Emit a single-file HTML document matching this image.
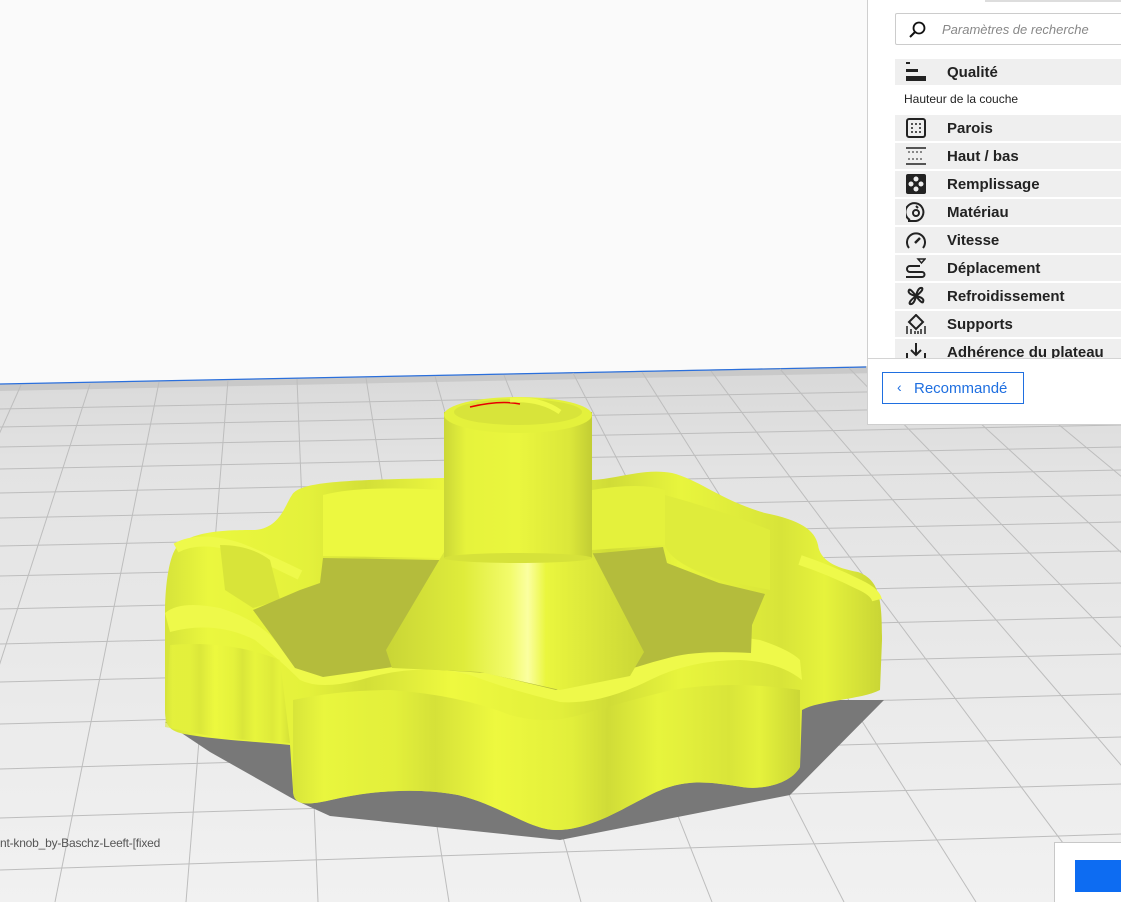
<!DOCTYPE html>
<html><head><meta charset="utf-8"><style>
*{margin:0;padding:0;box-sizing:border-box}
body{width:1121px;height:902px;overflow:hidden;background:#fafafa;font-family:"Liberation Sans","DejaVu Sans",sans-serif;position:relative}
#scene{position:absolute;left:0;top:0}
#panel{position:absolute;left:867px;top:0;width:254px;height:425px;background:#fff;border-left:1px solid #cfcfcf;border-bottom:1px solid #cfcfcf}
.search{position:absolute;left:27px;top:13px;width:240px;height:32px;border:1px solid #ccc;border-radius:2px}
.search span{position:absolute;left:46px;top:8px;font-size:13px;font-style:italic;color:#888}
.row{position:absolute;left:27px;width:240px;height:26px;background:#efefef}
.row b{position:absolute;left:52px;top:5px;font-size:15px;color:#222}
.row svg{position:absolute;left:11px;top:3px}
.sub{position:absolute;left:36px;top:92px;font-size:12px;color:#222}
.sep{position:absolute;left:0;top:358px;width:254px;height:1px;background:#d4d4d4}
.btn{position:absolute;left:14px;top:372px;width:142px;height:32px;border:1px solid #1f6fe0;color:#1f6fe0;font-size:15px}
.btn span{position:absolute;left:31px;top:7px}
.btn i{position:absolute;left:14px;top:6px;font-style:normal;font-size:14px}
#br{position:absolute;left:1054px;top:842px;width:67px;height:60px;background:#fff;border-left:1px solid #c8c8c8;border-top:1px solid #c8c8c8}
#br div{position:absolute;left:20px;top:17px;width:47px;height:32px;background:#0d6cf2}
#fn{position:absolute;left:0;top:836px;font-size:12px;color:#555;letter-spacing:-0.2px}
</style></head><body>
<svg id="scene" width="1121" height="902" viewBox="0 0 1121 902">
<defs>
<linearGradient id="fl" x1="0" y1="0" x2="0" y2="1"><stop offset="0" stop-color="#d8d8d8"/><stop offset="0.2" stop-color="#e3e3e3"/><stop offset="1" stop-color="#f1f1f1"/></linearGradient>
<linearGradient id="wall" x1="0" y1="0" x2="1" y2="0">
<stop offset="0" stop-color="#d6e33a"/><stop offset="0.06" stop-color="#eaf73e"/><stop offset="0.2" stop-color="#e4f13b"/><stop offset="0.28" stop-color="#d3df38"/><stop offset="0.4" stop-color="#eef93f"/><stop offset="0.55" stop-color="#e2ef3b"/><stop offset="0.62" stop-color="#d0dc37"/><stop offset="0.72" stop-color="#e8f53d"/><stop offset="0.86" stop-color="#d8e439"/><stop offset="0.92" stop-color="#e6f33c"/><stop offset="1" stop-color="#c9d535"/></linearGradient>
<linearGradient id="col" x1="0" y1="0" x2="1" y2="0"><stop offset="0" stop-color="#cbd737"/><stop offset="0.15" stop-color="#e6f33c"/><stop offset="0.5" stop-color="#eaf63e"/><stop offset="0.85" stop-color="#dbe73a"/><stop offset="1" stop-color="#c2cd34"/></linearGradient>
<linearGradient id="cone" x1="0" y1="0" x2="1" y2="0"><stop offset="0" stop-color="#c9d536"/><stop offset="0.3" stop-color="#dfec3b"/><stop offset="0.48" stop-color="#f2fb6a"/><stop offset="0.55" stop-color="#fbffa0"/><stop offset="0.62" stop-color="#eaf63e"/><stop offset="1" stop-color="#cad636"/></linearGradient>
</defs>
<polygon points="0,384 1121,361 1121,902 0,902" fill="url(#fl)"/>
<polygon points="0,384 1121,361 1121,368 0,391" fill="#c9c9c9"/>
<line x1="0" y1="384" x2="866" y2="367" stroke="#2a6fdc" stroke-width="1.2"/>
<g stroke="#bdbdbd" stroke-width="1">
<line x1="0" y1="409" x2="1121" y2="387"/><line x1="0" y1="427" x2="1121" y2="405"/><line x1="0" y1="447" x2="1121" y2="425"/><line x1="0" y1="469" x2="1121" y2="447"/><line x1="0" y1="493" x2="1121" y2="470"/><line x1="0" y1="518" x2="1121" y2="495"/><line x1="0" y1="546" x2="1121" y2="522"/><line x1="0" y1="576" x2="1121" y2="551"/><line x1="0" y1="609" x2="1121" y2="583"/><line x1="0" y1="644" x2="1121" y2="617"/><line x1="0" y1="682" x2="1121" y2="654"/><line x1="0" y1="724" x2="1121" y2="694"/><line x1="0" y1="769" x2="1121" y2="737"/><line x1="0" y1="818" x2="1121" y2="784"/><line x1="0" y1="870" x2="1121" y2="834"/>
<line x1="21" y1="385" x2="-209" y2="902"/><line x1="90" y1="384" x2="-77" y2="902"/><line x1="159" y1="382" x2="55" y2="902"/><line x1="228" y1="380" x2="186" y2="902"/><line x1="297" y1="379" x2="318" y2="902"/><line x1="366" y1="378" x2="449" y2="902"/><line x1="435" y1="376" x2="581" y2="902"/><line x1="504" y1="375" x2="712" y2="902"/><line x1="573" y1="373" x2="844" y2="902"/><line x1="642" y1="372" x2="976" y2="902"/><line x1="711" y1="371" x2="1107" y2="902"/><line x1="780" y1="369" x2="1239" y2="902"/><line x1="849" y1="368" x2="1370" y2="902"/><line x1="918" y1="366" x2="1502" y2="902"/><line x1="987" y1="365" x2="1634" y2="902"/><line x1="1056" y1="364" x2="1765" y2="902"/>
</g>
<!-- shadow -->
<polygon points="165,722 210,752 295,800 330,816 560,840 790,795 884,700 860,700 600,700 300,720" fill="#787878"/>
<!-- knob silhouette -->
<path d="M165,613 C165,590 168,560 176,548 C190,530 230,530 255,530 C280,528 285,505 292,495 C300,482 340,480 444,478 L593,480 C620,478 645,468 672,473 C700,480 720,500 765,513 C800,520 815,530 818,545 C820,560 835,568 858,572 C880,580 882,600 882,640 L880,690 C860,700 820,700 802,710 L800,767 C790,785 760,790 742,787 C700,780 680,780 650,795 C620,810 590,830 556,830 C530,830 500,805 458,795 C420,788 380,790 340,798 C310,805 293,808 293,790 L290,745 C260,742 220,740 190,735 C170,732 165,727 165,710 Z" fill="url(#wall)"/>
<!-- rim tops (lighter) -->
<path d="M165,613 Q180,600 220,608 Q250,617 270,635 Q290,660 320,668 Q360,668 400,660 Q460,655 510,675 Q545,690 570,680 Q610,668 640,650 Q700,630 760,640 Q790,650 800,660 L802,680 Q780,662 740,660 Q690,660 650,680 Q600,705 560,702 Q510,690 470,675 Q420,662 360,680 Q320,690 300,680 Q280,660 255,640 Q215,620 170,632 Z" fill="#eef94a"/>
<path d="M176,548 Q200,535 240,548 Q270,560 300,575" stroke="#eef94a" stroke-width="10" fill="none"/>
<path d="M800,560 Q830,570 860,585 Q875,592 877,600" stroke="#eef94a" stroke-width="10" fill="none"/>
<!-- inner back walls -->
<path d="M323,495 Q360,485 444,490 L444,558 L323,556 Z" fill="#ecf840"/>
<path d="M592,490 Q640,482 665,490 L665,545 L592,550 Z" fill="#e4f13c"/>
<path d="M665,495 Q720,510 770,530 L770,590 L720,580 Q670,563 665,545 Z" fill="#dfec3b"/>
<path d="M220,545 Q250,545 270,560 L280,600 L253,608 L225,590 Z" fill="#d8e439"/>
<!-- floor -->
<path d="M253,610 L300,590 L320,583 L323,558 L440,560 L600,553 L663,547 L667,563 L719,583 L765,594 L752,625 L751,653 Q700,650 672,657 Q640,665 607,677 L556,690 L486,673 L393,667 L323,677 L295,668 L275,640 Z" fill="#b4bc3c"/>
<!-- cone -->
<path d="M444,552 L592,552 L644,652 L630,676 L560,690 L480,672 L392,668 L386,650 Z" fill="url(#cone)"/>
<!-- column -->
<rect x="444" y="412" width="148" height="146" fill="url(#col)"/>
<ellipse cx="518" cy="558" rx="74" ry="5" fill="#d6e23a"/>
<ellipse cx="518" cy="415" rx="74" ry="18" fill="#e4f13c"/>
<ellipse cx="518" cy="412" rx="64" ry="13" fill="#d8e43a"/>
<path d="M470,407 Q500,400 520,404" stroke="#e60000" stroke-width="1.5" fill="none"/>
<path d="M510,400 Q540,398 560,412" stroke="#eef94a" stroke-width="5" fill="none"/>
<!-- front rim wall repaint -->
<path d="M293,700 Q340,690 390,690 Q460,695 510,715 Q545,725 580,715 Q630,700 672,690 Q730,680 800,690 L800,767 C790,785 760,790 742,787 C700,780 680,780 650,795 C620,810 590,830 556,830 C530,830 500,805 458,795 C420,788 380,790 340,798 C310,805 293,808 293,790 Z" fill="url(#wall)" opacity="0.9"/>
<path d="M170,645 Q230,640 280,660 L290,743 L220,738 L165,727 Z" fill="url(#wall)" opacity="0.6"/>
</svg>

<div id="panel">
<div style="position:absolute;left:117px;top:0;width:137px;height:2px;background:#ddd"></div>
<div class="search">
<svg width="20" height="20" style="position:absolute;left:12px;top:6px" viewBox="0 0 20 20"><circle cx="11" cy="8" r="5.5" fill="none" stroke="#111" stroke-width="1.8"/><line x1="7" y1="12" x2="2" y2="17" stroke="#111" stroke-width="2"/></svg>
<span>Paramètres de recherche</span></div>
<div class="row" style="top:59px"><svg width="20" height="20" viewBox="0 0 20 20"><rect x="0" y="0" width="4" height="2" fill="#222"/><rect x="0" y="7" width="12" height="3" fill="#222"/><rect x="0" y="14" width="20" height="5" fill="#222"/></svg><b>Qualité</b></div>
<div class="sub">Hauteur de la couche</div>
<div class="row" style="top:115px"><svg width="20" height="20" viewBox="0 0 20 20"><rect x="1" y="1" width="18" height="18" rx="2" fill="none" stroke="#222" stroke-width="2"/><g fill="#222"><circle cx="6" cy="6" r="1"/><circle cx="10" cy="6" r="1"/><circle cx="14" cy="6" r="1"/><circle cx="6" cy="10" r="1"/><circle cx="14" cy="10" r="1"/><circle cx="6" cy="14" r="1"/><circle cx="10" cy="14" r="1"/><circle cx="14" cy="14" r="1"/></g></svg><b>Parois</b></div>
<div class="row" style="top:143px"><svg width="20" height="20" viewBox="0 0 20 20"><g stroke="#222"><line x1="0" y1="2" x2="20" y2="2" stroke-width="1.5"/><line x1="2" y1="6" x2="18" y2="6" stroke-dasharray="2 2"/><line x1="2" y1="13" x2="18" y2="13" stroke-dasharray="2 2"/><line x1="0" y1="18" x2="20" y2="18" stroke-width="1.5"/></g></svg><b>Haut / bas</b></div>
<div class="row" style="top:171px"><svg width="20" height="20" viewBox="0 0 20 20"><rect x="0" y="0" width="20" height="20" rx="2" fill="#222"/><g fill="#eee"><circle cx="10" cy="5" r="2.5"/><circle cx="5" cy="10" r="2.5"/><circle cx="15" cy="10" r="2.5"/><circle cx="10" cy="15" r="2.5"/></g></svg><b>Remplissage</b></div>
<div class="row" style="top:199px"><svg width="20" height="20" viewBox="0 0 20 20"><path d="M4,18 A9,9 0 1,1 10,19 L2,19" fill="none" stroke="#222" stroke-width="2"/><circle cx="10" cy="11" r="3" fill="none" stroke="#222" stroke-width="2"/><line x1="10" y1="4" x2="12" y2="6" stroke="#222" stroke-width="2"/></svg><b>Matériau</b></div>
<div class="row" style="top:227px"><svg width="20" height="20" viewBox="0 0 20 20"><path d="M3,18 A9,9 0 1,1 17,18" fill="none" stroke="#222" stroke-width="2"/><line x1="9" y1="13" x2="14" y2="8" stroke="#222" stroke-width="2.5"/></svg><b>Vitesse</b></div>
<div class="row" style="top:255px"><svg width="20" height="20" viewBox="0 0 20 20"><path d="M12,1 L19,1 L15.5,5 Z" fill="none" stroke="#222" stroke-width="1.5"/><path d="M14,8 L4,8 A3,3 0 0,0 4,14 L16,14 A2.5,2.5 0 0,1 16,19 L0,19" fill="none" stroke="#222" stroke-width="2"/></svg><b>Déplacement</b></div>
<div class="row" style="top:283px"><svg width="20" height="20" viewBox="0 0 20 20"><g fill="none" stroke="#222" stroke-width="2"><path d="M10,10 Q4,2 3,4 Q1,8 10,10"/><path d="M10,10 Q18,4 16,2 Q12,1 10,10"/><path d="M10,10 Q16,18 17,16 Q19,12 10,10"/><path d="M10,10 Q2,16 4,18 Q8,19 10,10"/></g></svg><b>Refroidissement</b></div>
<div class="row" style="top:311px"><svg width="20" height="20" viewBox="0 0 20 20"><path d="M10,1 L17,8 L10,15 L3,8 Z" fill="none" stroke="#222" stroke-width="2"/><g stroke="#222" stroke-width="1.5"><line x1="1" y1="12" x2="1" y2="20"/><line x1="5" y1="15" x2="5" y2="20"/><line x1="9" y1="17" x2="9" y2="20"/><line x1="12" y1="17" x2="12" y2="20"/><line x1="15" y1="15" x2="15" y2="20"/><line x1="19" y1="12" x2="19" y2="20"/></g></svg><b>Supports</b></div>
<div class="row" style="top:339px;height:19px;overflow:hidden"><svg width="20" height="20" viewBox="0 0 20 20"><path d="M1,11 L1,18 L19,18 L19,11" fill="none" stroke="#222" stroke-width="2"/><line x1="10" y1="1" x2="10" y2="13" stroke="#222" stroke-width="2"/><path d="M5,8 L10,13 L15,8" fill="none" stroke="#222" stroke-width="2"/></svg><b>Adhérence du plateau</b></div>
<div class="sep"></div>
<div class="btn"><i>‹</i><span>Recommandé</span></div>
</div>
<div id="fn">nt-knob_by-Baschz-Leeft-[fixed</div>
<div id="br"><div></div></div>
</body></html>
